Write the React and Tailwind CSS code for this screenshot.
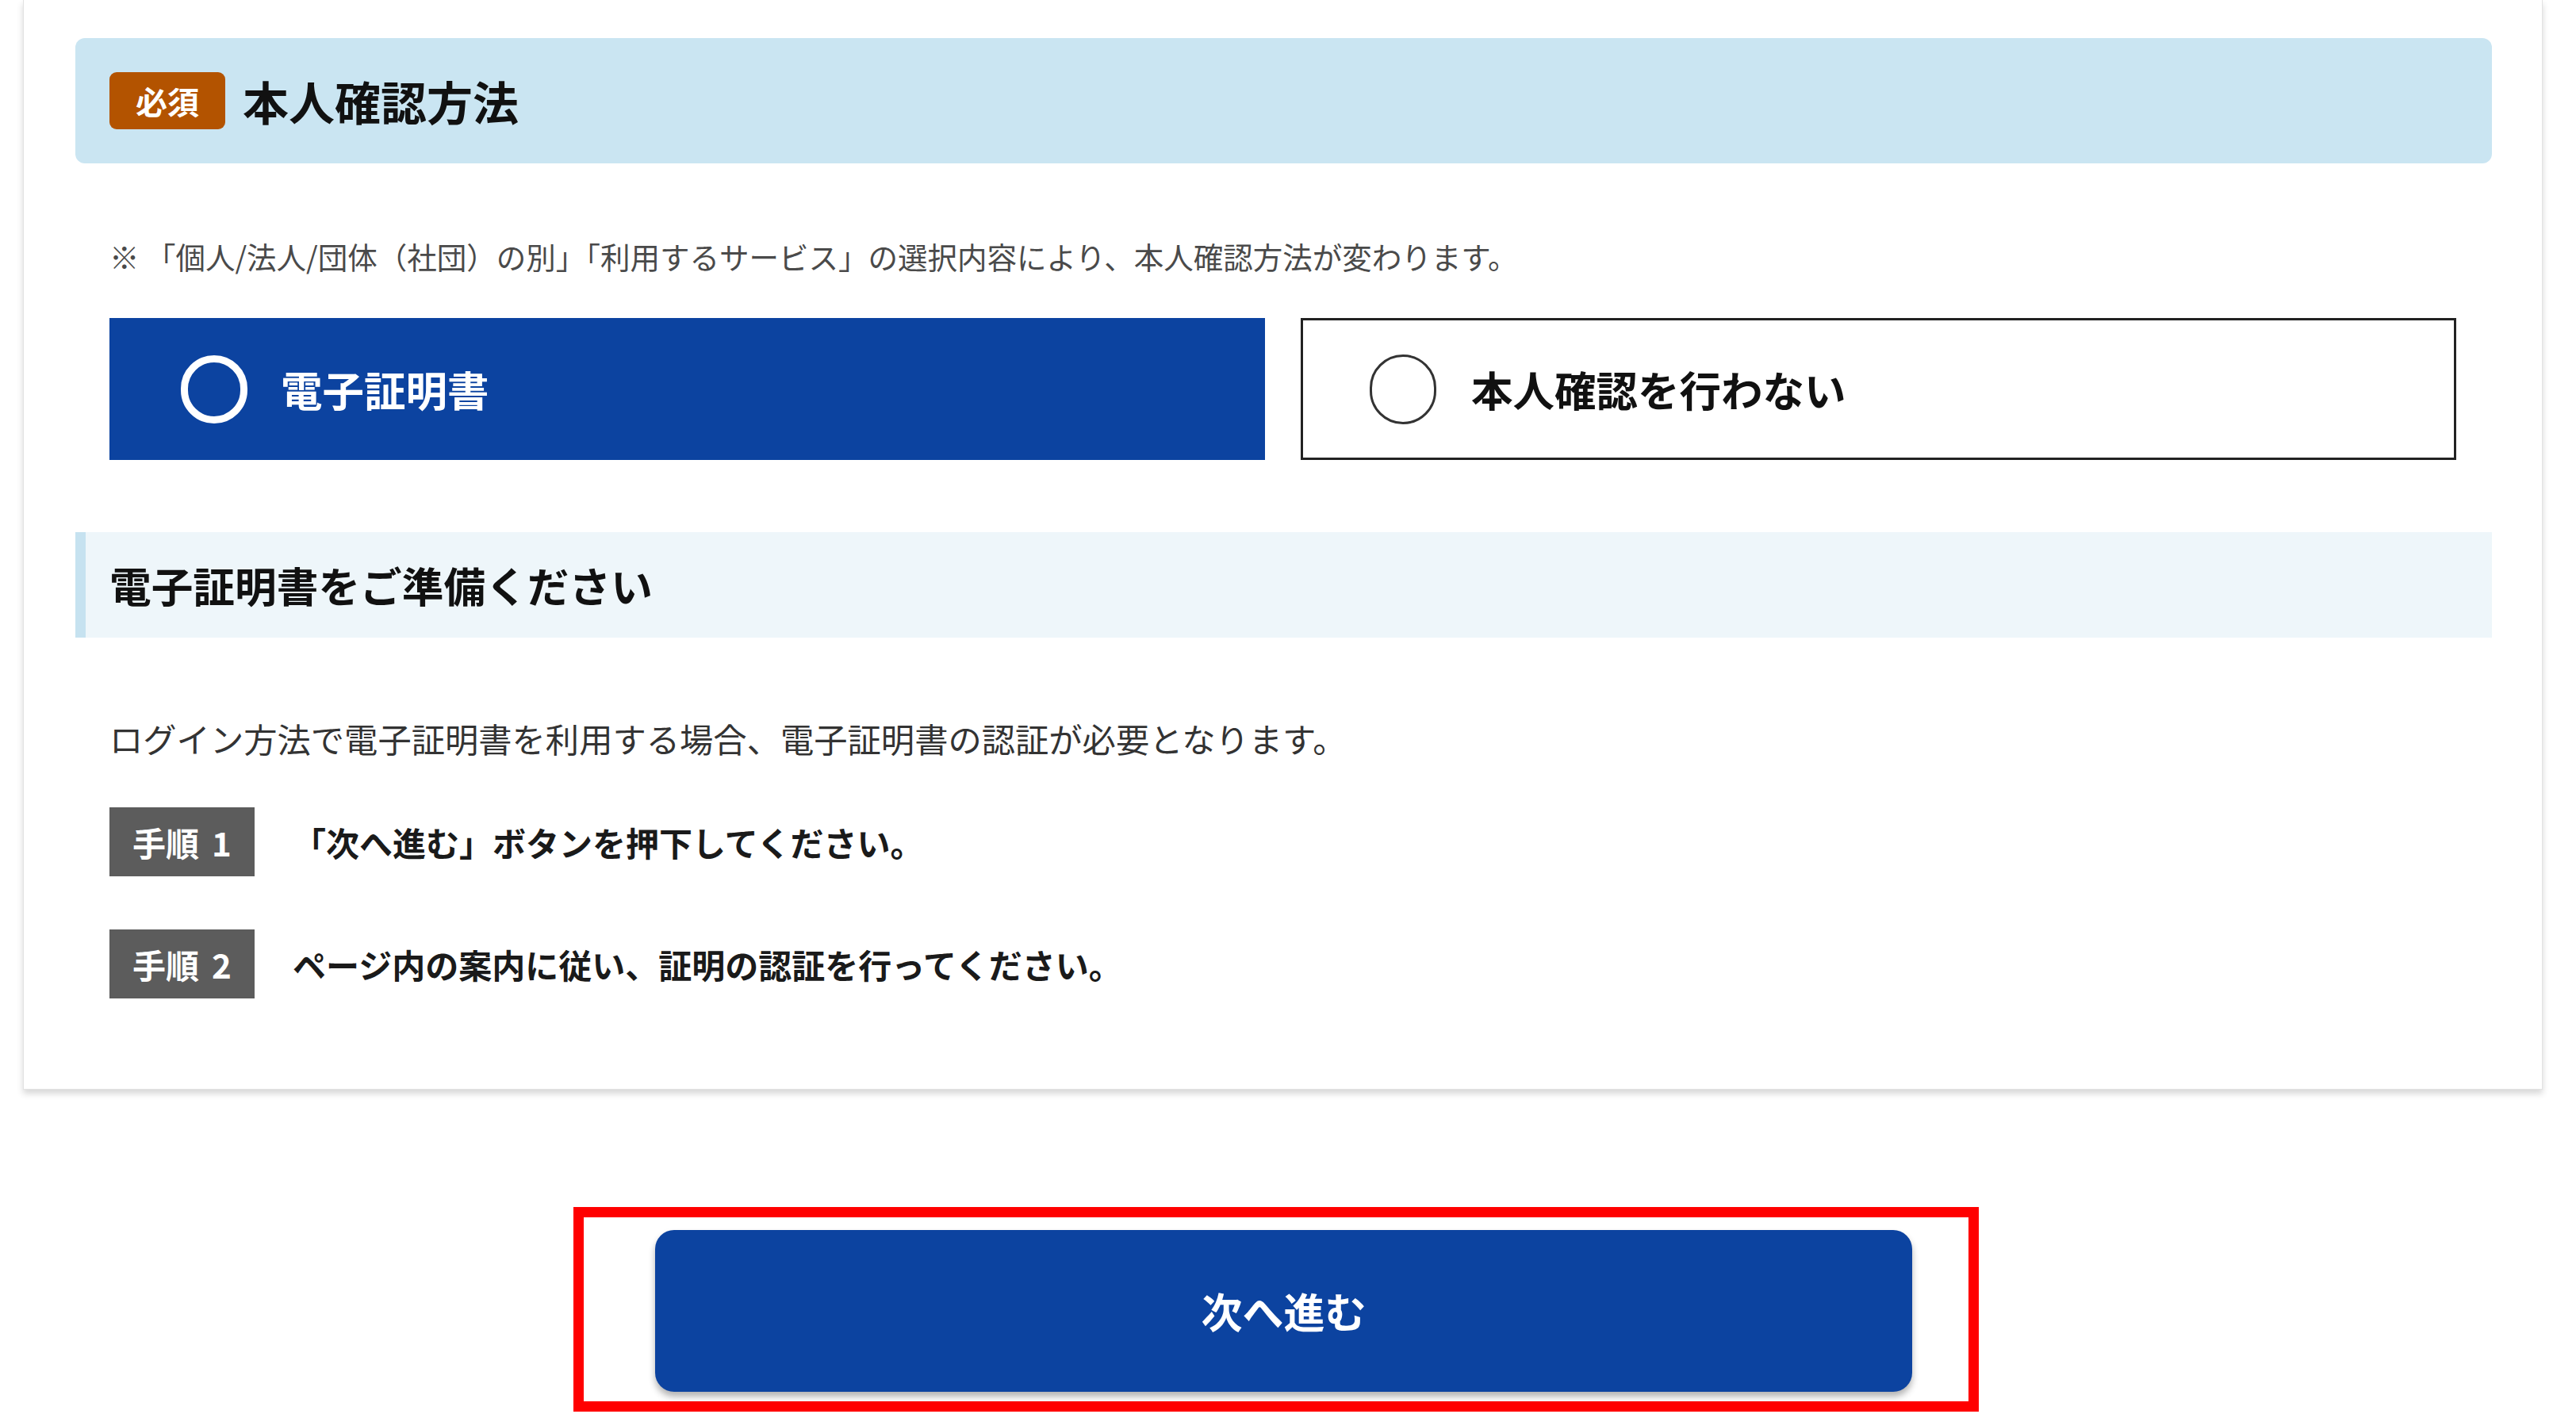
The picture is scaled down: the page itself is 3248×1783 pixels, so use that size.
import React from "react";

const font = { fontFamily: '"Noto Sans CJK JP", "Noto Sans", sans-serif' };

function Step({ label, num, text, className }) {
  return (
    <div className={"flex items-center " + className}>
      <div className="flex h-[87px] w-[183px] shrink-0 items-center justify-center gap-[16px] bg-[#5c5c5c] text-[42px] font-bold text-white">
        <span>{label}</span>
        <span>{num}</span>
      </div>
      <p className="ml-[48px] text-[42px] font-bold leading-[60px] text-[#1a1a1a]">{text}</p>
    </div>
  );
}

export default function App() {
  return (
    <div className="min-h-[1783px] w-[3248px] bg-white pl-[29px]" style={font}>
      <div className="w-[3177px] border border-t-0 border-[#e2e2e2] bg-white pl-[65px] pr-[63px] pt-[48px] pb-[114px] shadow-[0_5px_8px_rgba(0,0,0,0.16)]">
        {/* Header */}
        <div className="flex h-[158px] items-center rounded-[12px] bg-[#cae5f2] pl-[43px]">
          <span className="flex h-[72px] w-[146px] items-center justify-center rounded-[9px] bg-[#b35300] text-[40px] font-bold text-white">
            必須
          </span>
          <h1 className="ml-[22px] text-[58px] font-bold leading-none text-[#111]">本人確認方法</h1>
        </div>

        <div className="pl-[43px] pr-[45px]">
          <p className="mt-[90px] text-[37.5px] leading-[54px] text-[#4a4a4a]">
            ※ 「個人/法人/団体（社団）の別」「利用するサービス」の選択内容により、本人確認方法が変わります。
          </p>

          <div className="mt-[51px] grid grid-cols-2 gap-[45px]">
            <div className="flex h-[179px] items-center bg-[#0c43a0] pl-[90px]">
              <span className="h-[86px] w-[84px] shrink-0 rounded-full border-[9px] border-white" />
              <span className="ml-[42px] text-[52.5px] font-bold text-white">電子証明書</span>
            </div>
            <div className="flex h-[179px] items-center border-[3px] border-[#222] bg-white pl-[84px]">
              <span className="h-[88px] w-[84px] shrink-0 rounded-full border-[3px] border-[#333]" />
              <span className="ml-[44px] text-[52.5px] font-bold text-[#111]">本人確認を行わない</span>
            </div>
          </div>
        </div>

        {/* Sub header */}
        <div className="mt-[91px] flex h-[133px] items-center border-l-[13px] border-[#c6e2f0] bg-[#eef6fa] pl-[30px]">
          <h2 className="text-[52.7px] font-bold text-[#111]">電子証明書をご準備ください</h2>
        </div>

        <div className="pl-[43px] pr-[45px]">
          <p className="mt-[97px] text-[42.3px] leading-[60px] text-[#333]">
            ログイン方法で電子証明書を利用する場合、電子証明書の認証が必要となります。
          </p>
          <Step className="mt-[57px]" label="手順" num="1" text="「次へ進む」ボタンを押下してください。" />
          <Step className="mt-[67px]" label="手順" num="2" text="ページ内の案内に従い、証明の認証を行ってください。" />
        </div>
      </div>

      {/* Next button with red annotation frame */}
      <div className="mt-[148px] pl-[694px]">
        <div className="w-[1772px] border-[13px] border-[#ff0000] pt-[16px] pb-[12px] pl-[90px] pr-[71px]">
          <button className="flex h-[204px] w-full items-center justify-center rounded-[24px] bg-[#0c43a0] text-[52px] font-bold text-white shadow-[0_6px_8px_rgba(0,0,0,0.3)]">
            次へ進む
          </button>
        </div>
      </div>
    </div>
  );
}
